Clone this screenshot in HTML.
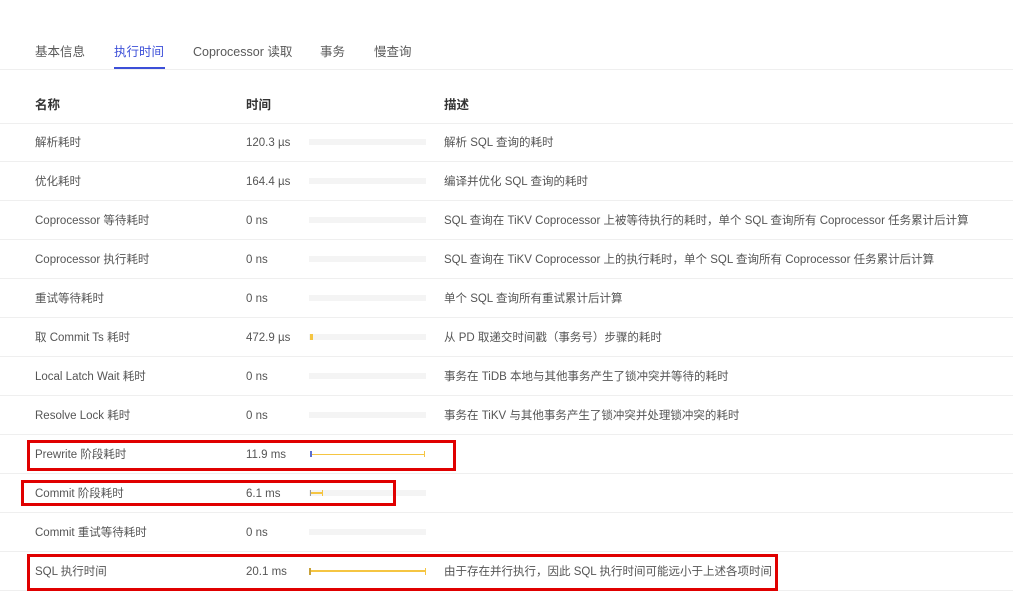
<!DOCTYPE html>
<html><head><meta charset="utf-8"><style>
*{margin:0;padding:0;box-sizing:border-box}
body{width:1013px;height:595px;background:#fff;font-family:"Liberation Sans","Noto Sans CJK SC",sans-serif;color:#555;font-size:11.5px;position:relative;overflow:hidden}
.a{position:absolute;white-space:nowrap;line-height:16px}
.tab{top:44px;font-size:12.5px;color:#595959}
.line{position:absolute;left:0;width:1013px;height:1px;background:#efefef}
.bar{position:absolute;left:309px;width:117px;height:6px;background:#f4f4f4}
.red{position:absolute;border:3px solid #e00000}
</style></head><body>
<div class="a tab" style="left:35px">基本信息</div>
<div class="a tab" style="left:114px;color:#3c4fd8">执行时间</div>
<div class="a tab" style="left:193px">Coprocessor 读取</div>
<div class="a tab" style="left:320px">事务</div>
<div class="a tab" style="left:374px">慢查询</div>
<div class="a" style="left:114px;top:67px;width:51px;height:2px;background:#3c4fd8"></div>
<div class="line" style="top:69px"></div>
<div class="a" style="left:35px;top:97px;font-size:12.5px;font-weight:bold;color:#333">名称</div>
<div class="a" style="left:246px;top:97px;font-size:12.5px;font-weight:bold;color:#333">时间</div>
<div class="a" style="left:444px;top:97px;font-size:12.5px;font-weight:bold;color:#333">描述</div>
<div class="line" style="top:123px"></div>
<div id="rows"></div>
<script>
var r=[["解析耗时","120.3 µs","解析 SQL 查询的耗时",0],
["优化耗时","164.4 µs","编译并优化 SQL 查询的耗时",0],
["Coprocessor 等待耗时","0 ns","SQL 查询在 TiKV Coprocessor 上被等待执行的耗时，单个 SQL 查询所有 Coprocessor 任务累计后计算",0],
["Coprocessor 执行耗时","0 ns","SQL 查询在 TiKV Coprocessor 上的执行耗时，单个 SQL 查询所有 Coprocessor 任务累计后计算",0],
["重试等待耗时","0 ns","单个 SQL 查询所有重试累计后计算",0],
["取 Commit Ts 耗时","472.9 µs","从 PD 取递交时间戳（事务号）步骤的耗时",1],
["Local Latch Wait 耗时","0 ns","事务在 TiDB 本地与其他事务产生了锁冲突并等待的耗时",0],
["Resolve Lock 耗时","0 ns","事务在 TiKV 与其他事务产生了锁冲突并处理锁冲突的耗时",0],
["Prewrite 阶段耗时","11.9 ms","",2],
["Commit 阶段耗时","6.1 ms","",3],
["Commit 重试等待耗时","0 ns","",0],
["SQL 执行时间","20.1 ms","由于存在并行执行，因此 SQL 执行时间可能远小于上述各项时间",4]];
var h="";
r.forEach(function(x,i){var c=142+39*i;var t=c-7;
h+='<div class="a" style="left:35px;top:'+t+'px">'+x[0]+'</div><div class="a" style="left:246px;top:'+t+'px">'+x[1]+'</div><div class="a" style="left:444px;top:'+t+'px">'+x[2]+'</div>';
if(x[3]!=2&&x[3]!=4)h+='<div class="bar" style="top:'+(c-3)+'px"></div>';
if(x[3]==1)h+='<div class="a" style="left:310px;top:'+(c-3)+'px;width:3px;height:6px;background:#f5c542"></div>';
if(x[3]==2)h+='<div class="a" style="left:310px;top:'+(c-3)+'px;width:2px;height:6px;background:#5a6fd0"></div><div class="a" style="left:312px;top:'+c+'px;width:113px;height:1px;background:#f5c542"></div><div class="a" style="left:424px;top:'+(c-3)+'px;width:1px;height:6px;background:#f5c542"></div>';
if(x[3]==3)h+='<div class="a" style="left:310px;top:'+(c-3)+'px;width:1px;height:6px;background:#999"></div><div class="a" style="left:311px;top:'+(c-1)+'px;width:12px;height:2px;background:#f5c542"></div><div class="a" style="left:322px;top:'+(c-3)+'px;width:1px;height:6px;background:#f5c542"></div>';
if(x[3]==4)h+='<div class="a" style="left:309px;top:'+(c-3)+'px;width:2px;height:7px;background:#c8a23a"></div><div class="a" style="left:311px;top:'+(c-1)+'px;width:115px;height:2px;background:#f5c542"></div><div class="a" style="left:425px;top:'+(c-3)+'px;width:1px;height:7px;background:#f5c542"></div>';
h+='<div class="line" style="top:'+(c+19)+'px"></div>';});
h+='<div class="red" style="left:27px;top:440px;width:429px;height:31px"></div><div class="red" style="left:21px;top:480px;width:375px;height:26px"></div><div class="red" style="left:27px;top:554px;width:751px;height:37px"></div>';
document.getElementById("rows").innerHTML=h;
</script>
</body></html>
